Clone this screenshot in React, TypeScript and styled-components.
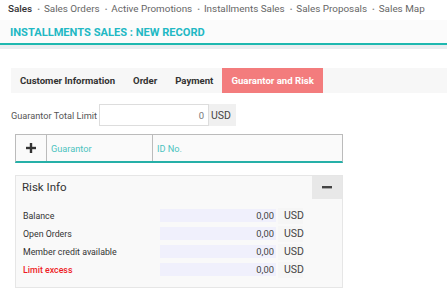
import styled, { createGlobalStyle } from "styled-components";

const GlobalStyle = createGlobalStyle`
  html, body {
    margin: 0;
    padding: 0;
    background: #fff;
    font-family: Roboto, "Liberation Sans", sans-serif;
    width: 447px;
    overflow: hidden;
  }
`;

const Page = styled.div`
  width: 447px;
  height: 296px;
  overflow: hidden;
`;

const Breadcrumbs = styled.nav`
  display: flex;
  align-items: center;
  height: 16px;
  padding: 0 0 0 8px;
  font-size: 9.9px;
  color: #666;
  white-space: nowrap;
`;

const Crumb = styled.span<{ $first?: boolean }>`
  color: ${(p) => (p.$first ? "#333" : "#666")};
  font-weight: ${(p) => (p.$first ? 500 : 400)};
  &::before {
    content: ${(p) => (p.$first ? "none" : '"•"')};
    color: #888;
    font-size: 8px;
    margin: 0 4px 0 5px;
  }
`;

const TitleBar = styled.header`
  margin-top: 4px;
  height: 25px;
  padding: 2px 0 0 10px;
  box-sizing: border-box;
  display: flex;
  align-items: center;
  background: #fbfbfb;
  border-bottom: 2px solid #1eb8b0;
`;

const Title = styled.h1`
  margin: 0;
  font-size: 11.1px;
  font-weight: 700;
  color: #22b8c4;
`;

const Strip = styled.div`
  height: 4px;
  background: #e9edf0;
`;

const Content = styled.main`
  padding: 19px 0 0 11px;
`;

const Tabs = styled.div`
  display: flex;
  height: 25px;
  background: #f7f7f7;
`;

const Tab = styled.div<{ $active?: boolean }>`
  display: flex;
  align-items: center;
  padding: 0 9px;
  font-size: 9.6px;
  font-weight: 700;
  color: ${(p) => (p.$active ? "#fff" : "#333")};
  background: ${(p) => (p.$active ? "#f37c7d" : "transparent")};
  &:first-child {
    padding-left: 9px;
  }
`;

const LimitRow = styled.div`
  display: flex;
  align-items: center;
  margin-top: 11px;
  height: 22px;
`;

const LimitLabel = styled.label`
  font-size: 9.2px;
  color: #555;
  width: 88px;
`;

const LimitInput = styled.div`
  width: 104px;
  height: 20px;
  border: 1px solid #ddd;
  display: flex;
  align-items: center;
  justify-content: flex-end;
  padding-right: 4px;
  font-size: 9.5px;
  color: #777;
`;

const Addon = styled.div`
  height: 22px;
  width: 27px;
  background: #f0f0f0;
  display: flex;
  align-items: center;
  padding-left: 2px;
  font-size: 10.5px;
  color: #444;
  box-sizing: border-box;
`;

const Grid = styled.div`
  margin: 8px 0 0 4px;
  width: 328px;
  height: 29px;
  box-sizing: border-box;
  display: grid;
  grid-template-columns: 30px 106px 1fr;
  border: 1px solid #bbb;
  border-bottom: 2px solid #26b0a8;
  background: #fafafa;
`;

const HeadCell = styled.div<{ $center?: boolean }>`
  display: flex;
  align-items: center;
  justify-content: ${(p) => (p.$center ? "center" : "flex-start")};
  padding-left: ${(p) => (p.$center ? "0" : "4px")};
  border-left: 1px solid #bbb;
  font-size: 9.2px;
  color: #4cc3c0;
  &:first-child {
    border-left: none;
  }
`;

const Panel = styled.section`
  margin: 12px 0 0 4px;
  width: 328px;
  height: 113px;
  box-sizing: border-box;
  border: 1px solid #e6e6e6;
  background: #f9f9f9;
`;

const PanelHead = styled.div`
  display: flex;
  justify-content: space-between;
  height: 23px;
`;

const PanelTitle = styled.h2`
  margin: 0;
  padding: 4px 0 0 6px;
  font-size: 11.5px;
  font-weight: 400;
  color: #333;
`;

const Collapse = styled.button`
  width: 30px;
  height: 23px;
  border: none;
  padding: 0;
  background: #e8e8e8;
  display: flex;
  align-items: center;
  justify-content: center;
`;

const Rows = styled.div`
  padding: 10px 0 0 7px;
  display: flex;
  flex-direction: column;
  gap: 5px;
`;

const Row = styled.div`
  display: flex;
  align-items: center;
  height: 13px;
`;

const RowLabel = styled.span<{ $alert?: boolean }>`
  width: 137px;
  font-size: 8.8px;
  color: ${(p) => (p.$alert ? "#ee1c25" : "#333")};
  font-weight: ${(p) => (p.$alert ? 500 : 400)};
`;

const Value = styled.span`
  width: 116px;
  height: 13px;
  box-sizing: border-box;
  padding-right: 2px;
  background: #f0f0fc;
  display: flex;
  align-items: center;
  justify-content: flex-end;
  font-size: 9.4px;
  color: #444;
`;

const Currency = styled.span`
  width: 19px;
  height: 16px;
  margin-left: 2px;
  padding-left: 6px;
  display: flex;
  align-items: center;
  background: #f6f6f6;
  font-size: 10.5px;
  color: #444;
`;

const crumbs = ["Sales", "Sales Orders", "Active Promotions", "Installments Sales", "Sales Proposals", "Sales Map"];
const tabs = ["Customer Information", "Order", "Payment", "Guarantor and Risk"];
const risk = [
  { label: "Balance" },
  { label: "Open Orders" },
  { label: "Member credit available" },
  { label: "Limit excess", alert: true },
];

export default function App() {
  return (
    <Page>
      <GlobalStyle />
      <Breadcrumbs>
        {crumbs.map((c, i) => (
          <Crumb key={c} $first={i === 0}>
            {c}
          </Crumb>
        ))}
      </Breadcrumbs>
      <TitleBar>
        <Title>INSTALLMENTS SALES : NEW RECORD</Title>
      </TitleBar>
      <Strip />
      <Content>
        <Tabs>
          {tabs.map((t, i) => (
            <Tab key={t} $active={i === tabs.length - 1}>
              {t}
            </Tab>
          ))}
        </Tabs>
        <LimitRow>
          <LimitLabel>Guarantor Total Limit</LimitLabel>
          <LimitInput>0</LimitInput>
          <Addon>USD</Addon>
        </LimitRow>
        <Grid>
          <HeadCell $center>
            <svg width="10" height="10" viewBox="0 0 10 10">
              <rect x="3.8" y="0" width="2.4" height="10" fill="#333" />
              <rect x="0" y="3.8" width="10" height="2.4" fill="#333" />
            </svg>
          </HeadCell>
          <HeadCell>Guarantor</HeadCell>
          <HeadCell>ID No.</HeadCell>
        </Grid>
        <Panel>
          <PanelHead>
            <PanelTitle>Risk Info</PanelTitle>
            <Collapse aria-label="collapse">
              <svg width="10" height="3" viewBox="0 0 10 3">
                <rect width="10" height="2.4" fill="#444" />
              </svg>
            </Collapse>
          </PanelHead>
          <Rows>
            {risk.map((r) => (
              <Row key={r.label}>
                <RowLabel $alert={r.alert}>{r.label}</RowLabel>
                <Value>0,00</Value>
                <Currency>USD</Currency>
              </Row>
            ))}
          </Rows>
        </Panel>
      </Content>
    </Page>
  );
}
